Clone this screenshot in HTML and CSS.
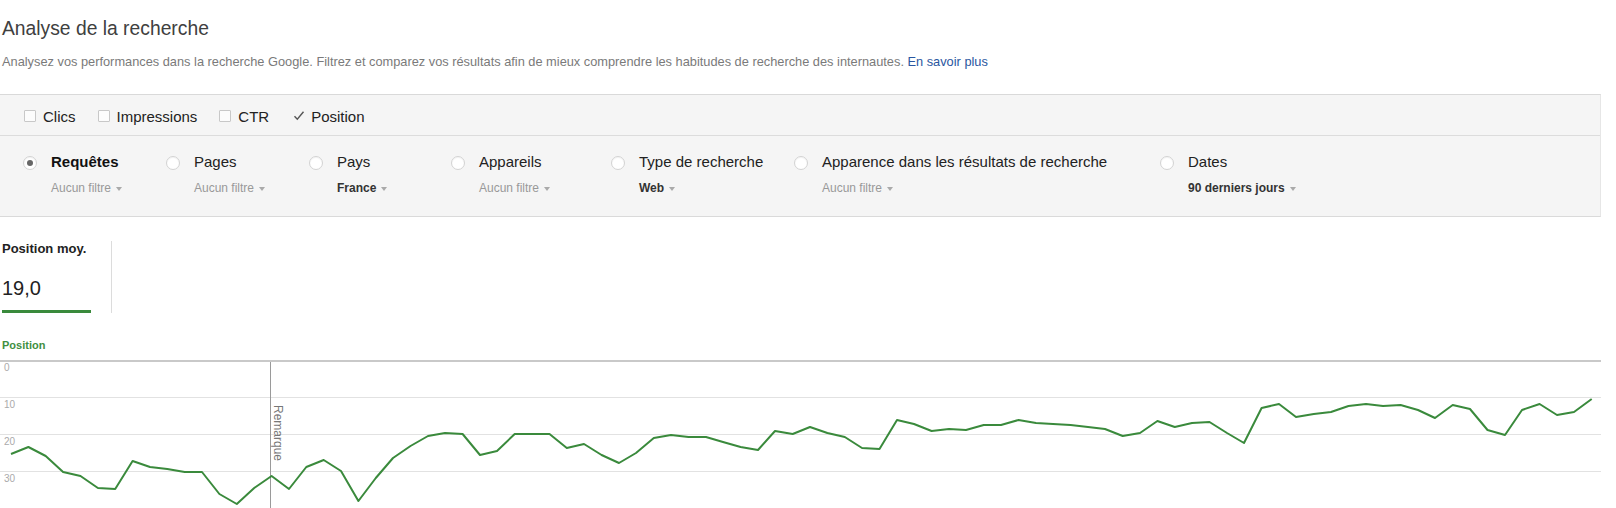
FILE: index.html
```html
<!DOCTYPE html>
<html lang="fr">
<head>
<meta charset="utf-8">
<title>Analyse de la recherche</title>
<link rel="stylesheet" href="styles.css">
</head>
<body>
<div class="page">
  <h1 class="title">Analyse de la recherche</h1>
  <p class="desc">Analysez vos performances dans la recherche Google. Filtrez et comparez vos résultats afin de mieux comprendre les habitudes de recherche des internautes. <a class="link" href="#">En savoir plus</a></p>

  <div class="panel">
    <div class="metrics-row">
      <label class="metric-opt"><span class="cbox"></span><span>Clics</span></label>
      <label class="metric-opt"><span class="cbox"></span><span>Impressions</span></label>
      <label class="metric-opt"><span class="cbox"></span><span>CTR</span></label>
      <label class="metric-opt"><svg class="check" width="12" height="12" viewBox="0 0 12 12"><path d="M1.5 6.2 L4.3 9.2 L10.5 1.8" fill="none" stroke="#555" stroke-width="1.4"/></svg><span>Position</span></label>
    </div>
    <div class="dims-row">
      <div class="dim"><span class="radio selected"></span><div class="dim-body"><div class="dim-label bold">Requêtes</div><div class="dim-sub">Aucun filtre<span class="caret"></span></div></div></div>
      <div class="dim"><span class="radio"></span><div class="dim-body"><div class="dim-label">Pages</div><div class="dim-sub">Aucun filtre<span class="caret"></span></div></div></div>
      <div class="dim"><span class="radio"></span><div class="dim-body"><div class="dim-label">Pays</div><div class="dim-sub strong">France<span class="caret"></span></div></div></div>
      <div class="dim"><span class="radio"></span><div class="dim-body"><div class="dim-label">Appareils</div><div class="dim-sub">Aucun filtre<span class="caret"></span></div></div></div>
      <div class="dim"><span class="radio"></span><div class="dim-body"><div class="dim-label">Type de recherche</div><div class="dim-sub strong">Web<span class="caret"></span></div></div></div>
      <div class="dim"><span class="radio"></span><div class="dim-body"><div class="dim-label">Apparence dans les résultats de recherche</div><div class="dim-sub">Aucun filtre<span class="caret"></span></div></div></div>
      <div class="dim"><span class="radio"></span><div class="dim-body"><div class="dim-label">Dates</div><div class="dim-sub strong">90 derniers jours<span class="caret"></span></div></div></div>
    </div>
  </div>

  <div class="summary">
    <div class="metric-card">
      <div class="metric-name">Position moy.</div>
      <div class="metric-value">19,0</div>
    </div>
    <div class="vdivider"></div>
  </div>

  <div class="series-label">Position</div>

  <svg class="chart" width="1601" height="160" viewBox="0 0 1601 160">
    <line x1="0" y1="1" x2="1601" y2="1" stroke="#c9c9c9" stroke-width="2"/>
    <line x1="0" y1="37.5" x2="1601" y2="37.5" stroke="#e2e2e2" stroke-width="1"/>
    <line x1="0" y1="74.5" x2="1601" y2="74.5" stroke="#e2e2e2" stroke-width="1"/>
    <line x1="0" y1="111.5" x2="1601" y2="111.5" stroke="#e2e2e2" stroke-width="1"/>
    <line x1="0" y1="148.5" x2="1601" y2="148.5" stroke="#e2e2e2" stroke-width="1"/>
    <text class="axis" x="4" y="11">0</text>
    <text class="axis" x="4" y="48">10</text>
    <text class="axis" x="4" y="85">20</text>
    <text class="axis" x="4" y="122">30</text>
    <line x1="270.5" y1="2" x2="270.5" y2="160" stroke="#9a9a9a" stroke-width="1"/>
    <text class="note" transform="translate(274,45) rotate(90)">Remarque</text>
    <polyline fill="none" stroke="#3a8a3c" stroke-width="2" stroke-linejoin="round" points="11,94 28.4,87 45.7,96 63.1,112 80.5,116 97.9,128 115.2,129 132.6,101 150,107 167.3,109 184.7,112 202,112 219.4,134 236.8,144 254.2,128 271.6,116 289,129 306.3,107 323.7,100 341,111 358.4,141 375.8,118 393,98 410.5,86 428,76 445,73 462.6,74 480,95 497,91 514.7,74 532,74 549.5,74 566.8,88 584,84 601.6,95 619,103 636,93 653.8,78 671,75 688.5,77 706,77 723,82 740.6,87 758,90 775,71 792.7,74 810,67 827.4,73 844.8,77 862,88 879.5,89 897,60 914,64 931.6,71 949,69 966,70 983.7,65 1001,65 1018.5,60 1036,63 1053,64 1070.6,65 1088,67 1105,69 1122.7,76 1140,73 1157.4,61 1174.8,67 1192,63 1209.5,62 1227,73 1244,83 1261.6,48 1279,44 1296,57 1313.8,54 1331,52 1348.5,46 1366,44 1383,46 1400.6,45 1418,50 1435,58 1452.7,45 1470,49 1487.5,70 1505,75 1522,50 1539.6,44 1557,55 1574,52 1591.7,39"/>
  </svg>
</div>
</body>
</html>
```

FILE: styles.css
```css
* { box-sizing: border-box; }

html, body {
  margin: 0;
  padding: 0;
  background: #fff;
  overflow: hidden;
}

body {
  font-family: "Liberation Sans", Arial, sans-serif;
  color: #222;
}

.page {
  width: 1601px;
}

.title {
  margin: 0;
  padding: 18px 0 0 2px;
  font-size: 19.3px;
  line-height: 22px;
  font-weight: normal;
  color: #404040;
}

.desc {
  margin: 14px 0 0;
  padding-left: 2px;
  font-size: 12.8px;
  line-height: 16px;
  color: #7a7a7a;
}

.link {
  color: #2a56a0;
  text-decoration: none;
}

.panel {
  margin-top: 24px;
  background: #f5f5f5;
  border-top: 1px solid #d9d9d9;
  border-bottom: 1px solid #dadada;
  border-right: 1px solid #e6e6e6;
}

.metrics-row {
  height: 41px;
  display: flex;
  align-items: center;
  padding: 2px 0 0 24px;
  border-bottom: 1px solid #dcdcdc;
  gap: 22px;
}

.metric-opt {
  display: flex;
  align-items: center;
  gap: 7px;
  font-size: 15px;
  color: #222;
}

.cbox {
  width: 12px;
  height: 12px;
  border: 1px solid #c8c8c8;
  background: #fcfcfc;
  border-radius: 1px;
}

.check {
  display: block;
  margin-left: 2px;
  margin-right: -1px;
}

.dims-row {
  display: grid;
  grid-template-columns: 143px 143px 142px 160px 183px 366px auto;
  padding: 17px 0 20px 23px;
}

.dim {
  display: flex;
  align-items: flex-start;
  gap: 14px;
}

.radio {
  flex: none;
  width: 14px;
  height: 14px;
  margin-top: 3px;
  border-radius: 50%;
  border: 1px solid #d3d3d3;
  background: #fff;
  box-shadow: inset 0 1px 1px rgba(0, 0, 0, 0.05);
  display: flex;
  align-items: center;
  justify-content: center;
}

.radio.selected::after {
  content: "";
  width: 6px;
  height: 6px;
  border-radius: 50%;
  background: #666;
}

.dim-label {
  font-size: 15px;
  line-height: 18px;
  color: #222;
  white-space: nowrap;
}

.dim-label.bold {
  font-weight: bold;
  color: #111;
}

.dim-sub {
  margin-top: 9px;
  font-size: 12px;
  line-height: 16px;
  color: #999;
  white-space: nowrap;
}

.dim-sub.strong {
  font-weight: bold;
  color: #333;
}

.caret {
  display: inline-block;
  width: 0;
  height: 0;
  margin-left: 5px;
  vertical-align: middle;
  border-left: 3.5px solid transparent;
  border-right: 3.5px solid transparent;
  border-top: 4px solid #aaa;
}

.summary {
  display: flex;
  margin-top: 24px;
}

.metric-card {
  width: 89px;
  margin-left: 2px;
  padding-bottom: 10px;
  border-bottom: 3px solid #3a8a3c;
}

.metric-name {
  font-size: 13px;
  line-height: 16px;
  font-weight: bold;
  color: #222;
}

.metric-value {
  margin-top: 19px;
  font-size: 20px;
  line-height: 24px;
  color: #222;
}

.vdivider {
  width: 1px;
  margin-left: 20px;
  background: #dcdcdc;
}

.series-label {
  margin-top: 25px;
  padding-left: 2px;
  font-size: 11px;
  line-height: 14px;
  font-weight: bold;
  color: #3f8f3f;
}

.chart {
  display: block;
  margin-top: 8px;
}

.axis {
  font-family: "Liberation Sans", Arial, sans-serif;
  font-size: 10px;
  fill: #aaa;
}

.note {
  font-family: "Liberation Sans", Arial, sans-serif;
  font-size: 12px;
  fill: #777;
}
```
